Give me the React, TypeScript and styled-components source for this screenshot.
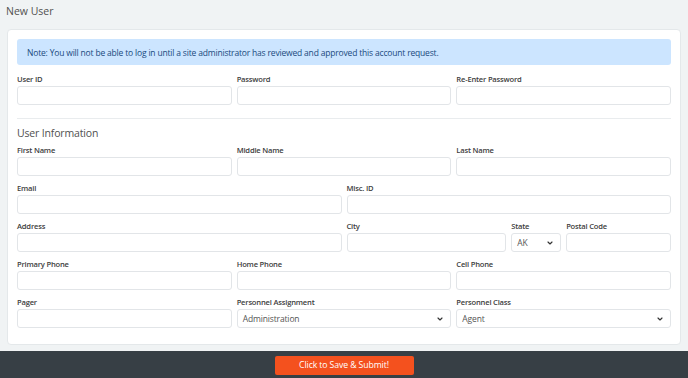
import React from "react";
import styled, { createGlobalStyle } from "styled-components";
import { ChevronDown } from "lucide-react";

const Global = createGlobalStyle`
  html, body { margin: 0; padding: 0; }
  body {
    background: #f0f3f4;
    font-family: "Open Sans", "Liberation Sans", sans-serif;
    color: #444;
  }
  * { box-sizing: border-box; }
`;

const Page = styled.div`
  display: flex;
  flex-direction: column;
  min-height: 378px;
`;

const Title = styled.h1`
  margin: 0;
  height: 29px;
  padding: 3px 6px 0;
  font-size: 10.5px;
  line-height: 16px;
  font-weight: 400;
  color: #505050;
`;

const Card = styled.div`
  margin: 0 7px;
  background: #fff;
  border: 1px solid #e4e8ea;
  border-radius: 4px;
  padding: 9px 9px 16px;
`;

const Alert = styled.div`
  background: #cce5ff;
  color: #1a4a7e;
  border-radius: 3px;
  height: 26px;
  padding: 0 10px;
  display: flex;
  align-items: center;
  font-size: 8.5px;
  font-weight: 500;
  letter-spacing: -0.18px;
  margin-bottom: 9px;
`;

const Grid = styled.div`
  display: grid;
  grid-template-columns: repeat(12, 1fr);
  column-gap: 5px;
  row-gap: 7px;
`;

const Field = styled.div<{ $span: number }>`
  grid-column: span ${(p) => p.$span};
  display: flex;
  flex-direction: column;
  min-width: 0;
`;

const Label = styled.label`
  font-size: 7.6px;
  letter-spacing: -0.2px;
  line-height: 10px;
  font-weight: 600;
  color: #404040;
  margin-bottom: 2px;
  white-space: nowrap;
`;

const Input = styled.input`
  height: 19px;
  width: 100%;
  border: 1px solid #e2e5e8;
  border-radius: 3px;
  background: #fff;
  outline: none;
  padding: 0 6px;
  font-family: inherit;
  font-size: 9px;
`;

const SelectBox = styled.div`
  position: relative;
  height: 19px;
  border: 1px solid #e2e5e8;
  border-radius: 3px;
  background: #fff;
  display: flex;
  align-items: center;
  justify-content: space-between;
  padding: 0 6px 0 5px;
  font-size: 8.5px;
  font-weight: 500;
  letter-spacing: -0.14px;
  color: #555;
`;

const Divider = styled.hr`
  border: none;
  border-top: 1px solid #e9ecee;
  margin: 13px 0 6px;
`;

const SectionTitle = styled.h2`
  margin: 0 0 4px;
  font-size: 10.5px;
  letter-spacing: -0.16px;
  line-height: 16px;
  font-weight: 400;
  color: #505050;
`;

const Footer = styled.div`
  margin-top: 6px;
  background: #373f45;
  height: 28px;
  display: flex;
  align-items: center;
  justify-content: center;
`;

const SubmitButton = styled.button`
  background: #f4511e;
  color: #fff;
  border: none;
  border-radius: 2px;
  width: 139px;
  height: 19px;
  font-family: inherit;
  font-size: 8.7px;
  font-weight: 500;
  letter-spacing: -0.1px;
  padding: 0;
  cursor: pointer;
`;

type F = { label: string; span: number; select?: string };

const TextField = ({ label, span, select }: F) => (
  <Field $span={span}>
    <Label>{label}</Label>
    {select ? (
      <SelectBox>
        <span>{select}</span>
        <ChevronDown size={8} strokeWidth={3.5} color="#333" />
      </SelectBox>
    ) : (
      <Input type={label.includes("Password") ? "password" : "text"} />
    )}
  </Field>
);

const accountFields: F[] = [
  { label: "User ID", span: 4 },
  { label: "Password", span: 4 },
  { label: "Re-Enter Password", span: 4 },
];

const infoFields: F[] = [
  { label: "First Name", span: 4 },
  { label: "Middle Name", span: 4 },
  { label: "Last Name", span: 4 },
  { label: "Email", span: 6 },
  { label: "Misc. ID", span: 6 },
  { label: "Address", span: 6 },
  { label: "City", span: 3 },
  { label: "State", span: 1, select: "AK" },
  { label: "Postal Code", span: 2 },
  { label: "Primary Phone", span: 4 },
  { label: "Home Phone", span: 4 },
  { label: "Cell Phone", span: 4 },
  { label: "Pager", span: 4 },
  { label: "Personnel Assignment", span: 4, select: "Administration" },
  { label: "Personnel Class", span: 4, select: "Agent" },
];

export default function App() {
  return (
    <Page>
      <Global />
      <Title>New User</Title>
      <Card>
        <Alert>
          Note: You will not be able to log in until a site administrator has reviewed and approved this account request.
        </Alert>
        <Grid>
          {accountFields.map((f) => (
            <TextField key={f.label} {...f} />
          ))}
        </Grid>
        <Divider />
        <SectionTitle>User Information</SectionTitle>
        <Grid>
          {infoFields.map((f) => (
            <TextField key={f.label} {...f} />
          ))}
        </Grid>
      </Card>
      <Footer>
        <SubmitButton>Click to Save &amp; Submit!</SubmitButton>
      </Footer>
    </Page>
  );
}
